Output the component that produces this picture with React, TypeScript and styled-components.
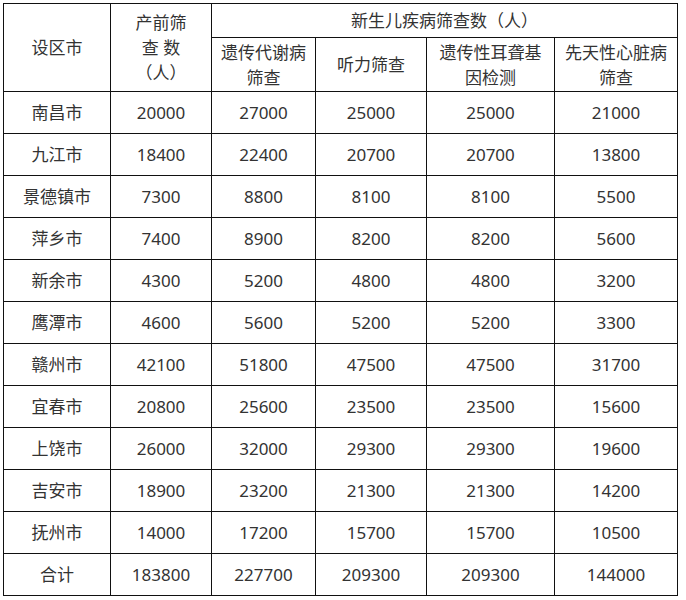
import React from "react";
import styled, { createGlobalStyle } from "styled-components";

const Global = createGlobalStyle`
  html, body { margin: 0; padding: 0; background: #fff; }
  body { font-family: "Noto Sans", "Noto Sans CJK SC", sans-serif; }
`;

const Page = styled.div`
  padding: 3px 0 0 3px;
`;

const Table = styled.table`
  border-collapse: collapse;
  table-layout: fixed;
  width: 674px;
  color: #333;
  font-family: "Noto Sans", "Noto Sans CJK SC", sans-serif;
  font-size: 17px;
  line-height: 25px;
`;

const Th = styled.th<{ $h?: number }>`
  border: 1px solid #111;
  font-weight: normal;
  text-align: center;
  vertical-align: middle;
  padding: 0;
  height: ${(p) => (p.$h ? `${p.$h}px` : "auto")};
`;

const Td = styled.td`
  border: 1px solid #111;
  text-align: center;
  vertical-align: middle;
  padding: 0;
  height: 41px;
`;

const widths = [107, 101, 104, 111, 128, 123];

const rows: [string, number, number, number, number, number][] = [
  ["南昌市", 20000, 27000, 25000, 25000, 21000],
  ["九江市", 18400, 22400, 20700, 20700, 13800],
  ["景德镇市", 7300, 8800, 8100, 8100, 5500],
  ["萍乡市", 7400, 8900, 8200, 8200, 5600],
  ["新余市", 4300, 5200, 4800, 4800, 3200],
  ["鹰潭市", 4600, 5600, 5200, 5200, 3300],
  ["赣州市", 42100, 51800, 47500, 47500, 31700],
  ["宜春市", 20800, 25600, 23500, 23500, 15600],
  ["上饶市", 26000, 32000, 29300, 29300, 19600],
  ["吉安市", 18900, 23200, 21300, 21300, 14200],
  ["抚州市", 14000, 17200, 15700, 15700, 10500],
  ["合计", 183800, 227700, 209300, 209300, 144000],
];

export default function App() {
  return (
    <Page>
      <Global />
      <Table>
        <colgroup>
          {widths.map((w, i) => (
            <col key={i} style={{ width: w }} />
          ))}
        </colgroup>
        <thead>
          <tr>
            <Th rowSpan={2}>设区市</Th>
            <Th rowSpan={2}>
              产前筛
              <br />
              查 数
              <br />
              （人）
            </Th>
            <Th colSpan={4} $h={33}>
              新生儿疾病筛查数（人）
            </Th>
          </tr>
          <tr>
            <Th $h={53}>
              遗传代谢病
              <br />
              筛查
            </Th>
            <Th $h={53}>听力筛查</Th>
            <Th $h={53}>
              遗传性耳聋基
              <br />
              因检测
            </Th>
            <Th $h={53}>
              先天性心脏病
              <br />
              筛查
            </Th>
          </tr>
        </thead>
        <tbody>
          {rows.map((r) => (
            <tr key={r[0]}>
              {r.map((c, i) => (
                <Td key={i}>{c}</Td>
              ))}
            </tr>
          ))}
        </tbody>
      </Table>
    </Page>
  );
}
